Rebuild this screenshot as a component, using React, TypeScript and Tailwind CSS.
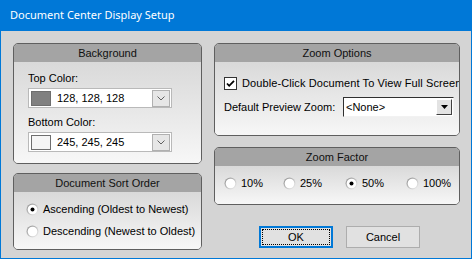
import React from 'react';

const font = { fontFamily: '"Liberation Sans", Arial, sans-serif' };

function GroupBox({ title, className, children }: { title: string; className?: string; children: React.ReactNode }) {
  return (
    <div className={`flex flex-col overflow-hidden rounded-[5px] border border-[#5f5f5f] ${className ?? ''}`}>
      <div className="flex h-[18px] shrink-0 items-center justify-center bg-[#a4a4a4] text-[11px] text-[#101010]">{title}</div>
      <div className="flex-1 bg-gradient-to-b from-[#d9d9d9] to-[#f7f7f7]">{children}</div>
    </div>
  );
}

function Radio({ checked }: { checked?: boolean }) {
  return (
    <svg width="13" height="13" viewBox="0 0 13 13" className="shrink-0">
      <defs>
        <linearGradient id="rg" x1="0" y1="0" x2="1" y2="1">
          <stop offset="0" stopColor="#8c8c8c" />
          <stop offset="1" stopColor="#f4f4f4" />
        </linearGradient>
      </defs>
      <circle cx="6.5" cy="6.5" r="6" fill="url(#rg)" />
      <circle cx="6.5" cy="6.5" r="4.8" fill="#ffffff" />
      {checked && <circle cx="6.5" cy="6.5" r="2" fill="#000" />}
    </svg>
  );
}

function ColorCombo({ color, label }: { color: string; label: string }) {
  return (
    <div className="flex h-[20px] w-[144px] items-center border border-[#b9b9b9] bg-white">
      <div className="ml-[2px] h-[15px] w-[20px] border border-[#6e6e6e]" style={{ background: color }} />
      <span className="ml-[6px] text-black">{label}</span>
      <div className="ml-auto mr-[1px] flex h-[17px] w-[18px] items-center justify-center border border-[#b0b0b0] bg-[#e6e6e6]">
        <svg width="8" height="5" viewBox="0 0 8 5">
          <path d="M0.5 0.5 L4 4 L7.5 0.5" stroke="#606060" fill="none" />
        </svg>
      </div>
    </div>
  );
}

export default function App() {
  return (
    <div className="flex h-[259px] w-[472px] flex-col border border-t-0 border-[#0078d7] bg-[#d4d4d4]" style={font}>
      <div
        className="-mx-px flex h-[31px] shrink-0 items-center bg-[#0078d7] pl-[10px] text-[11px] text-white"
        style={{ fontFamily: '"Noto Sans", "Liberation Sans", sans-serif' }}
      >
        Document Center Display Setup
      </div>
      <div className="flex gap-[12px] whitespace-nowrap pl-[12px] pt-[12px] text-[11px]">
        <div className="flex w-[189px] flex-col gap-[9px]">
          <GroupBox title="Background" className="h-[121px]">
            <div className="flex flex-col pl-[14px] pt-[9px]">
              <span className="leading-[14px]">Top Color:</span>
              <div className="mt-[3px]"><ColorCombo color="#808080" label="128, 128, 128" /></div>
              <span className="mt-[7px] leading-[14px]">Bottom Color:</span>
              <div className="mt-[3px]"><ColorCombo color="#f5f5f5" label="245, 245, 245" /></div>
            </div>
          </GroupBox>
          <GroupBox title="Document Sort Order" className="h-[77px]">
            <div className="flex flex-col gap-[9px] pl-[12px] pt-[11px] leading-[13px]">
              <div className="flex items-center gap-[4px]"><Radio checked /><span>Ascending (Oldest to Newest)</span></div>
              <div className="flex items-center gap-[4px]"><Radio /><span>Descending (Newest to Oldest)</span></div>
            </div>
          </GroupBox>
        </div>
        <div className="flex w-[246px] flex-col">
          <GroupBox title="Zoom Options" className="h-[93px]">
            <div className="flex flex-col pl-[9px] pt-[15px]">
              <div className="flex items-center gap-[5px] leading-[13px]">
                <svg width="13" height="13" viewBox="0 0 13 13" className="shrink-0">
                  <rect x="0.5" y="0.5" width="12" height="12" fill="#fff" stroke="#333" />
                  <path d="M3 6.5 L5.2 8.8 L10 3.8" stroke="#000" strokeWidth="1.8" fill="none" />
                </svg>
                <span className="tracking-[0.1px]">Double-Click Document To View Full Screen</span>
              </div>
              <div className="mt-[7px] flex items-center">
                <span className="w-[119px]">Default Preview Zoom:</span>
                <div className="flex h-[20px] w-[111px] items-center border border-b-[#f2f2f2] border-l-[#303030] border-r-[#f2f2f2] border-t-[#303030] bg-white">
                  <span className="ml-[2px] flex-1">&lt;None&gt;</span>
                  <div className="mr-px flex h-[16px] w-[16px] items-center justify-center border border-b-[#404040] border-l-[#fff] border-r-[#404040] border-t-[#fff] bg-[#e3e3e3]">
                    <svg width="7" height="4" viewBox="0 0 7 4"><path d="M0 0 H7 L3.5 4 Z" fill="#000" /></svg>
                  </div>
                </div>
              </div>
            </div>
          </GroupBox>
          <GroupBox title="Zoom Factor" className="mt-[11px] h-[58px]">
            <div className="flex items-center pl-[9px] pt-[11px] leading-[13px]">
              <div className="flex w-[59px] items-center gap-[4px]"><Radio /><span>10%</span></div>
              <div className="flex w-[62px] items-center gap-[4px]"><Radio /><span>25%</span></div>
              <div className="flex w-[61px] items-center gap-[4px]"><Radio checked /><span>50%</span></div>
              <div className="flex items-center gap-[4px]"><Radio /><span>100%</span></div>
            </div>
          </GroupBox>
          <div className="mt-[21px] flex gap-[13px] pl-[45px]">
            <div className="flex h-[22px] w-[74px] items-center justify-center border-2 border-[#0078d7] bg-[#e1e1e1] p-px">
              <div className="flex h-full w-full items-center justify-center border border-dotted border-black">OK</div>
            </div>
            <div className="flex h-[22px] w-[74px] items-center justify-center border border-[#adadad] bg-[#e1e1e1]">Cancel</div>
          </div>
        </div>
      </div>
    </div>
  );
}
